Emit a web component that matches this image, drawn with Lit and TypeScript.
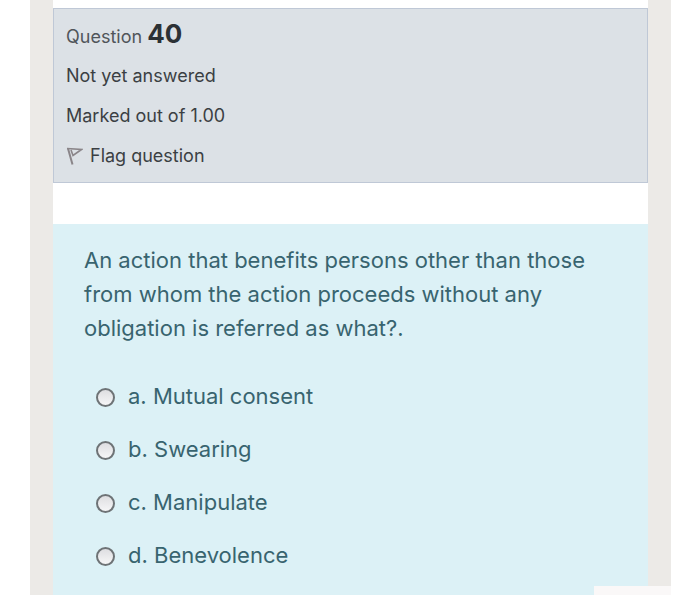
import { LitElement, html, css } from "lit";
import { customElement, property, state } from "lit/decorators.js";

interface Choice {
  letter: string;
  text: string;
}

@customElement("question-info")
class QuestionInfo extends LitElement {
  @property({ type: Number }) number = 0;
  @property() status = "";
  @property() grade = "";

  static styles = css`
    :host {
      display: block;
      box-sizing: border-box;
      padding: 7px 12px 6px;
      background: #dce1e6;
      border: 1px solid #bfc8d6;
      color: #3b3f43;
      font-size: 18px;
      line-height: 40px;
    }
    .number {
      margin: 0;
      padding-top: 2px;
      font-size: 18px;
      line-height: 38px;
      font-weight: 400;
      color: #50555a;
    }
    .value {
      font-size: 26px;
      line-height: 26px;
      font-weight: 700;
      color: #2c3135;
    }
    .row {
      display: block;
    }
    .flag {
      display: flex;
      align-items: center;
      gap: 7px;
      padding: 0;
      border: 0;
      background: none;
      color: inherit;
      font: inherit;
      cursor: pointer;
    }
    svg {
      display: block;
    }
  `;

  render() {
    return html`
      <h3 class="number">Question <span class="value">${this.number}</span></h3>
      <div class="row">${this.status}</div>
      <div class="row">${this.grade}</div>
      <button class="flag" type="button">
        <svg width="17" height="20" viewBox="0 0 17 20" fill="none" stroke="#8a8589" aria-hidden="true">
          <path d="M2 2.500 6.500 18.500" stroke-width="2" />
          <path d="M1 2.500 15.500 3.500 7 9.500 5 4" stroke-width="1.600" />
        </svg>
        Flag question
      </button>
    `;
  }
}

@customElement("question-body")
class QuestionBody extends LitElement {
  @property() prompt = "";
  @property({ attribute: false }) choices: Choice[] = [];
  @state() private selected = "";

  static styles = css`
    :host {
      display: block;
      padding: 19px 31px 23px;
      background: #dcf1f6;
      color: #38646f;
      font-size: 22px;
      line-height: 34px;
    }
    fieldset {
      margin: 0;
      padding: 0;
      border: 0;
      min-width: 0;
    }
    legend {
      padding: 0;
      max-width: 530px;
    }
    .choices {
      display: grid;
      gap: 19px;
      padding: 34px 0 0 12px;
    }
    .choice {
      display: flex;
      align-items: center;
      gap: 13px;
      cursor: pointer;
    }
    input {
      appearance: none;
      box-sizing: border-box;
      flex: none;
      width: 19px;
      height: 19px;
      margin: 2px 0 0;
      border: 2px solid #6e7376;
      border-radius: 50%;
      background: linear-gradient(#dedee1, #f6f6f7);
    }
    input:checked {
      background: radial-gradient(#38646f 4px, #f4f4f5 5px);
    }
  `;

  render() {
    return html`
      <fieldset>
        <legend>${this.prompt}</legend>
        <div class="choices">
          ${this.choices.map(
            (c) => html`
              <label class="choice">
                <input
                  type="radio"
                  name="answer"
                  .checked=${this.selected === c.letter}
                  @change=${() => (this.selected = c.letter)}
                />
                <span>${c.letter}. ${c.text}</span>
              </label>
            `
          )}
        </div>
      </fieldset>
    `;
  }
}

@customElement("app-root")
class AppRoot extends LitElement {
  private choices: Choice[] = [
    { letter: "a", text: "Mutual consent" },
    { letter: "b", text: "Swearing" },
    { letter: "c", text: "Manipulate" },
    { letter: "d", text: "Benevolence" },
  ];

  static styles = css`
    :host {
      display: block;
      padding: 0 29px 0 30px;
      background: #fff;
      font-family: Inter, "Liberation Sans", sans-serif;
    }
    .page {
      position: relative;
      padding: 0 23px;
      background: #eceae7;
    }
    .content {
      display: grid;
      gap: 41px;
      padding-top: 8px;
      background: #fff;
    }
    .corner {
      position: absolute;
      right: 0;
      bottom: 0;
      width: 77px;
      height: 9px;
      background: #faf8f8;
    }
  `;

  render() {
    return html`
      <div class="page">
        <main class="content">
          <question-info
            .number=${40}
            status="Not yet answered"
            grade="Marked out of 1.00"
          ></question-info>
          <question-body
            prompt="An action that benefits persons other than those from whom the action proceeds without any obligation is referred as what?."
            .choices=${this.choices}
          ></question-body>
        </main>
        <div class="corner"></div>
      </div>
    `;
  }
}
